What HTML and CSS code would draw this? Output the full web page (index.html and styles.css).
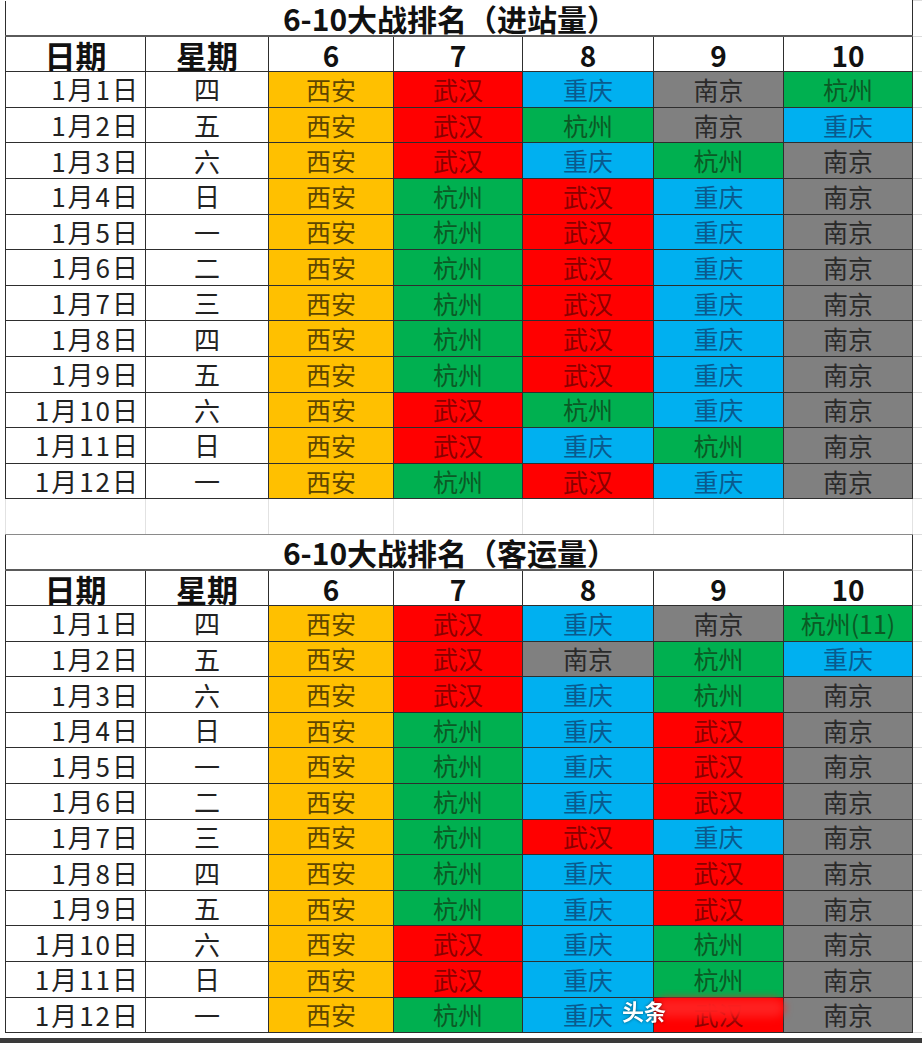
FILE: index.html
```html
<!DOCTYPE html>
<html lang="zh-CN">
<head>
<meta charset="utf-8">
<title>6-10大战排名</title>
<link rel="stylesheet" href="styles.css">
</head>
<body>
<div class="sheet">
<table class="grid">
<colgroup>
<col class="w-date"><col class="w-week"><col class="w-c6"><col class="w-c7"><col class="w-c8"><col class="w-c9"><col class="w-c10"><col class="w-out">
</colgroup>
<tbody>
<tr class="title"><td colspan="7">6-10大战排名（进站量）</td><td class="out"></td></tr>
<tr class="head"><td>日期</td><td>星期</td><td class="num">6</td><td class="num">7</td><td class="num">8</td><td class="num">9</td><td class="num">10</td><td class="out"></td></tr>
<tr><td class="date">1月1日</td><td class="week">四</td><td class="or">西安</td><td class="rd">武汉</td><td class="bl">重庆</td><td class="gy">南京</td><td class="gr">杭州</td><td class="out"></td></tr>
<tr><td class="date">1月2日</td><td class="week">五</td><td class="or">西安</td><td class="rd">武汉</td><td class="gr">杭州</td><td class="gy">南京</td><td class="bl">重庆</td><td class="out"></td></tr>
<tr><td class="date">1月3日</td><td class="week">六</td><td class="or">西安</td><td class="rd">武汉</td><td class="bl">重庆</td><td class="gr">杭州</td><td class="gy">南京</td><td class="out"></td></tr>
<tr><td class="date">1月4日</td><td class="week">日</td><td class="or">西安</td><td class="gr">杭州</td><td class="rd">武汉</td><td class="bl">重庆</td><td class="gy">南京</td><td class="out"></td></tr>
<tr><td class="date">1月5日</td><td class="week">一</td><td class="or">西安</td><td class="gr">杭州</td><td class="rd">武汉</td><td class="bl">重庆</td><td class="gy">南京</td><td class="out"></td></tr>
<tr><td class="date">1月6日</td><td class="week">二</td><td class="or">西安</td><td class="gr">杭州</td><td class="rd">武汉</td><td class="bl">重庆</td><td class="gy">南京</td><td class="out"></td></tr>
<tr><td class="date">1月7日</td><td class="week">三</td><td class="or">西安</td><td class="gr">杭州</td><td class="rd">武汉</td><td class="bl">重庆</td><td class="gy">南京</td><td class="out"></td></tr>
<tr><td class="date">1月8日</td><td class="week">四</td><td class="or">西安</td><td class="gr">杭州</td><td class="rd">武汉</td><td class="bl">重庆</td><td class="gy">南京</td><td class="out"></td></tr>
<tr><td class="date">1月9日</td><td class="week">五</td><td class="or">西安</td><td class="gr">杭州</td><td class="rd">武汉</td><td class="bl">重庆</td><td class="gy">南京</td><td class="out"></td></tr>
<tr><td class="date">1月10日</td><td class="week">六</td><td class="or">西安</td><td class="rd">武汉</td><td class="gr">杭州</td><td class="bl">重庆</td><td class="gy">南京</td><td class="out"></td></tr>
<tr><td class="date">1月11日</td><td class="week">日</td><td class="or">西安</td><td class="rd">武汉</td><td class="bl">重庆</td><td class="gr">杭州</td><td class="gy">南京</td><td class="out"></td></tr>
<tr><td class="date">1月12日</td><td class="week">一</td><td class="or">西安</td><td class="gr">杭州</td><td class="rd">武汉</td><td class="bl">重庆</td><td class="gy">南京</td><td class="out"></td></tr>
<tr class="gap"><td></td><td></td><td></td><td></td><td></td><td></td><td></td><td class="out"></td></tr>
<tr class="title title2"><td colspan="7">6-10大战排名（客运量）</td><td class="out"></td></tr>
<tr class="head"><td>日期</td><td>星期</td><td class="num">6</td><td class="num">7</td><td class="num">8</td><td class="num">9</td><td class="num">10</td><td class="out"></td></tr>
<tr><td class="date">1月1日</td><td class="week">四</td><td class="or">西安</td><td class="rd">武汉</td><td class="bl">重庆</td><td class="gy">南京</td><td class="gr">杭州(11)</td><td class="out"></td></tr>
<tr><td class="date">1月2日</td><td class="week">五</td><td class="or">西安</td><td class="rd">武汉</td><td class="gy">南京</td><td class="gr">杭州</td><td class="bl">重庆</td><td class="out"></td></tr>
<tr><td class="date">1月3日</td><td class="week">六</td><td class="or">西安</td><td class="rd">武汉</td><td class="bl">重庆</td><td class="gr">杭州</td><td class="gy">南京</td><td class="out"></td></tr>
<tr><td class="date">1月4日</td><td class="week">日</td><td class="or">西安</td><td class="gr">杭州</td><td class="bl">重庆</td><td class="rd">武汉</td><td class="gy">南京</td><td class="out"></td></tr>
<tr><td class="date">1月5日</td><td class="week">一</td><td class="or">西安</td><td class="gr">杭州</td><td class="bl">重庆</td><td class="rd">武汉</td><td class="gy">南京</td><td class="out"></td></tr>
<tr><td class="date">1月6日</td><td class="week">二</td><td class="or">西安</td><td class="gr">杭州</td><td class="bl">重庆</td><td class="rd">武汉</td><td class="gy">南京</td><td class="out"></td></tr>
<tr><td class="date">1月7日</td><td class="week">三</td><td class="or">西安</td><td class="gr">杭州</td><td class="rd">武汉</td><td class="bl">重庆</td><td class="gy">南京</td><td class="out"></td></tr>
<tr><td class="date">1月8日</td><td class="week">四</td><td class="or">西安</td><td class="gr">杭州</td><td class="bl">重庆</td><td class="rd">武汉</td><td class="gy">南京</td><td class="out"></td></tr>
<tr><td class="date">1月9日</td><td class="week">五</td><td class="or">西安</td><td class="gr">杭州</td><td class="bl">重庆</td><td class="rd">武汉</td><td class="gy">南京</td><td class="out"></td></tr>
<tr><td class="date">1月10日</td><td class="week">六</td><td class="or">西安</td><td class="rd">武汉</td><td class="bl">重庆</td><td class="gr">杭州</td><td class="gy">南京</td><td class="out"></td></tr>
<tr><td class="date">1月11日</td><td class="week">日</td><td class="or">西安</td><td class="rd">武汉</td><td class="bl">重庆</td><td class="gr">杭州</td><td class="gy">南京</td><td class="out"></td></tr>
<tr><td class="date">1月12日</td><td class="week">一</td><td class="or">西安</td><td class="gr">杭州</td><td class="bl">重庆</td><td class="rd">武汉</td><td class="gy">南京</td><td class="out"></td></tr>
</tbody>
</table>
<div class="watermark"><span class="wm-blob"></span><span class="wm-text">头条</span></div>
</div>
<div class="bottom-bar"></div>
</body>
</html>
```

FILE: styles.css
```css
html, body {
  margin: 0;
  padding: 0;
  background: #ffffff;
}

body {
  width: 922px;
  height: 1043px;
  overflow: hidden;
  font-family: "Noto Sans CJK SC", "Noto Sans", sans-serif;
  display: flex;
  flex-direction: column;
}

.sheet {
  position: relative;
  padding-left: 5px;
  height: 1038px;
  flex: none;
}

.grid {
  border-collapse: collapse;
  table-layout: fixed;
  width: 917px;
}

.w-date { width: 140px; }
.w-week { width: 123px; }
.w-c6 { width: 125px; }
.w-c7 { width: 129px; }
.w-c8 { width: 131px; }
.w-c9 { width: 130px; }
.w-c10 { width: 129px; }
.w-out { width: 10px; }

.grid td {
  padding: 0;
  border: 1px solid #2e2e2e;
  line-height: 1;
  text-align: center;
  white-space: nowrap;
  font-size: 25px;
  color: #222;
}

.grid tr { height: 35.6px; }

.grid td.out {
  border-left-color: #2e2e2e;
  border-right: none;
  border-top: 1px solid #dcdcdc;
  border-bottom: 1px solid #dcdcdc;
}

.title td {
  height: 31px;
  font-size: 30px;
  font-weight: 700;
  color: #111;
  border-top: none;
  border-bottom: 2px solid #5a5a5a;
  padding-top: 1px;
  text-indent: -18px;
}

.title2 td {
  border-top: 1px solid #8a8a8a;
}

.head td {
  height: 33px;
  font-size: 31px;
  font-weight: 700;
  color: #111;
  padding-top: 1px;
}

.head td.num {
  font-size: 28px;
}

.grid td.date {
  text-align: right;
  padding-right: 5px;
  font-size: 26px;
  letter-spacing: 2px;
  color: #222;
}

.grid td.week {
  font-size: 26px;
  color: #222;
}

.gap td {
  height: 34px;
  border-left: 1px solid #e2e2e2;
  border-right: 1px solid #e2e2e2;
  border-bottom: 1px solid #8a8a8a;
}

.grid td.or { background: #ffc000; color: #5e4600; }
.grid td.rd { background: #ff0000; color: #8a0000; }
.grid td.bl { background: #00b0f0; color: #0a5a8e; }
.grid td.gr { background: #00b050; color: #0b5a25; }
.grid td.gy { background: #808080; color: #2a2a2a; }

.watermark {
  position: absolute;
  left: 622px;
  top: 994px;
  width: 200px;
  height: 32px;
}

.wm-blob {
  position: absolute;
  left: 34px;
  top: 5px;
  width: 128px;
  height: 18px;
  border-radius: 9px;
  background: #ff2020;
  filter: blur(4px);
}

.wm-text {
  position: absolute;
  left: 0;
  top: 0;
  font-size: 22px;
  font-weight: 700;
  color: #ffffff;
  text-shadow: 0 0 3px rgba(0, 0, 0, 0.6);
  filter: blur(0.6px);
}

.bottom-bar {
  height: 5px;
  background: #3a3a3a;
  flex: none;
}
```
